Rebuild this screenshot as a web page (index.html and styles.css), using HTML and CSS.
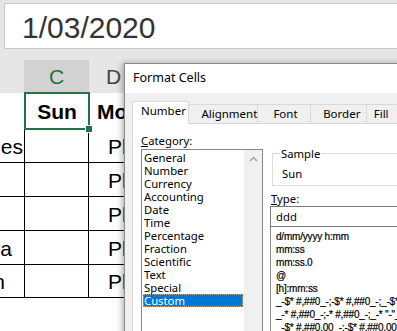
FILE: index.html
```html
<!DOCTYPE html>
<html lang="en">
<head>
    <meta charset="UTF-8">
    <title>Format Cells</title>
    <link rel="stylesheet" href="styles.css">
</head>
<body>
    <div class="app">
        <div class="formula-bar">
            <div class="formula-box">1/03/2020</div>
        </div>

        <div class="sheet">
            <div class="col-head"></div>
            <div class="col-head selected">C</div>
            <div class="col-head d-head">D</div>

            <div class="cell"></div>
            <div class="cell bold">Sun</div>
            <div class="cell bold mo">Mo</div>

            <div class="cell b-cell line pad-es">es</div>
            <div class="cell line"></div>
            <div class="cell line pl">Pl</div>

            <div class="cell b-cell line"></div>
            <div class="cell line"></div>
            <div class="cell line pl">Pl</div>

            <div class="cell b-cell line"></div>
            <div class="cell line"></div>
            <div class="cell line pl">Pl</div>

            <div class="cell b-cell line pad-ra">ra</div>
            <div class="cell line"></div>
            <div class="cell line pl">Pl</div>

            <div class="cell b-cell line pad-n">n</div>
            <div class="cell line"></div>
            <div class="cell line pl">Pl</div>

            <div class="selection"><span class="handle"></span></div>
        </div>

        <div class="dialog">
            <div class="dialog-title">Format Cells</div>
            <div class="dialog-body">
                <div class="tabs">
                    <div class="tab active">Number</div>
                    <div class="tab">Alignment</div>
                    <div class="tab">Font</div>
                    <div class="tab">Border</div>
                    <div class="tab">Fill</div>
                </div>
                <div class="tab-page">
                    <div class="category">
                        <div class="label"><u>C</u>ategory:</div>
                        <div class="listbox">
                            <ul class="items">
                                <li>General</li>
                                <li>Number</li>
                                <li>Currency</li>
                                <li>Accounting</li>
                                <li>Date</li>
                                <li>Time</li>
                                <li>Percentage</li>
                                <li>Fraction</li>
                                <li>Scientific</li>
                                <li>Text</li>
                                <li>Special</li>
                                <li class="current">Custom</li>
                            </ul>
                            <div class="scrollbar">
                                <svg width="9" height="6" viewBox="0 0 9 6"><path d="M1 5 L4.5 1.5 L8 5" fill="none" stroke="#a3a3a3" stroke-width="1.5"/></svg>
                            </div>
                        </div>
                    </div>
                    <div class="details">
                        <fieldset class="sample">
                            <legend>Sample</legend>
                            <div class="sample-value">Sun</div>
                        </fieldset>
                        <div class="label type-label"><u>T</u>ype:</div>
                        <div class="type-input">ddd</div>
                        <ul class="type-list">
                            <li>d/mm/yyyy h:mm</li>
                            <li>mm:ss</li>
                            <li>mm:ss.0</li>
                            <li>@</li>
                            <li>[h]:mm:ss</li>
                            <li>_-$* #,##0_-;-$* #,##0_-;_-$* "-"_-;_-@_-</li>
                            <li>_-* #,##0_-;-* #,##0_-;_-* "-"_-;_-@_-</li>
                            <li>_-$* #,##0.00_-;-$* #,##0.00_-;_-$* "-"??_-;_-@_-</li>
                        </ul>
                    </div>
                </div>
            </div>
        </div>
    </div>
</body>
</html>
```

FILE: styles.css
```css
body {
    margin: 0;
    background-color: #e6e6e6;
    font-family: "Liberation Sans", Arial, sans-serif;
    overflow: hidden;
}
.app {
    position: relative;
    width: 397px;
    height: 331px;
    overflow: hidden;
}

/* formula bar */
.formula-bar {
    padding: 3px 0 0 4px;
}
.formula-box {
    height: 46px;
    background-color: #fff;
    border: 1px solid #c8c8c8;
    border-right: none;
    box-sizing: border-box;
    padding-left: 17px;
    font-size: 30px;
    line-height: 47px;
    color: #333;
}

/* worksheet */
.sheet {
    position: relative;
    margin-top: 11px;
    display: grid;
    grid-template-columns: 25px 64px 320px;
    grid-template-rows: 33px 36px 34px 34px 34px 34px 33px;
    background-color: #fff;
    height: 290px;
    align-content: start;
}
.col-head {
    background-color: #e6e6e6;
    border-right: 1px solid #cfcfcf;
    display: flex;
    justify-content: center;
    align-items: center;
    font-size: 21px;
    color: #444;
}
.col-head.selected {
    background-color: #d2d2d2;
    color: #217346;
}
.col-head.d-head {
    justify-content: flex-start;
    padding-left: 17px;
    border-right: none;
}
.cell {
    display: flex;
    align-items: flex-end;
    padding-bottom: 3px;
    font-size: 21px;
    color: #000;
    overflow: hidden;
    white-space: nowrap;
    box-sizing: border-box;
}
.cell.bold {
    font-weight: bold;
    justify-content: center;
    padding-bottom: 5px;
}
.cell.bold.mo {
    justify-content: flex-start;
    padding-left: 8px;
}
.cell.line {
    border-bottom: 1px solid #000;
    border-right: 1px solid #000;
}
.b-cell {
    justify-content: flex-end;
}
.pad-es { padding-right: 1px; }
.pad-ra { padding-right: 12px; }
.pad-n { padding-right: 19px; }
.cell.pl {
    padding-left: 19px;
    border-right: none;
}
.selection {
    position: absolute;
    left: 24px;
    top: 32px;
    width: 62px;
    height: 34px;
    border: 2px solid #217346;
}
.handle {
    position: absolute;
    right: -5px;
    bottom: -5px;
    width: 6px;
    height: 6px;
    background-color: #217346;
    border: 1px solid #fff;
}

/* dialog */
.dialog {
    position: absolute;
    left: 124px;
    top: 63px;
    width: 300px;
    height: 290px;
    border: 1px solid #8a8a8a;
    background-color: #f0f0f0;
    box-shadow: -2px 0 6px rgba(0, 0, 0, 0.3);
    font-family: "Noto Sans", sans-serif;
    font-size: 11.3px;
    color: #000;
}
.dialog-title {
    height: 29px;
    background-color: #fff;
    padding-left: 8px;
    line-height: 27px;
    font-size: 12.5px;
}
.dialog-body {
    padding: 8px 0 0 7px;
}
.tabs {
    display: flex;
    align-items: flex-end;
    height: 22px;
}
.tab {
    height: 19px;
    box-sizing: border-box;
    border: 1px solid #d9d9d9;
    border-bottom: none;
    border-left: none;
    padding-left: 12px;
    line-height: 17px;
    white-space: nowrap;
    font-size: 11.5px;
}
.tab:nth-child(1) { width: 59px; }
.tab:nth-child(2) { width: 70px; }
.tab:nth-child(3) { width: 54px; padding-left: 15px; }
.tab:nth-child(4) { width: 57px; }
.tab:nth-child(5) { width: 60px; padding-left: 7px; }
.tab.active {
    height: 23px;
    margin-bottom: -1px;
    background-color: #fff;
    border-left: 1px solid #d9d9d9;
    padding-left: 8px;
    position: relative;
}
.tab-page {
    background-color: #fff;
    border: 1px solid #d9d9d9;
    height: 240px;
    padding: 8px 0 0 8px;
    display: grid;
    grid-template-columns: 122px 1fr;
    column-gap: 7px;
}
.label {
    height: 17px;
    line-height: 17px;
}
.listbox {
    display: flex;
    border: 1px solid #828790;
    height: 200px;
    box-sizing: border-box;
}
.items {
    list-style: none;
    margin: 0;
    padding: 1px 1px 0 1px;
    flex: 1;
}
.items li {
    height: 13px;
    line-height: 13px;
    padding-left: 1px;
    white-space: nowrap;
}
.items li.current {
    background-color: #0078d7;
    color: #fff;
    outline: 1px dotted #f0a040;
    outline-offset: -1px;
}
.scrollbar {
    width: 18px;
    background-color: #f0f0f0;
    display: flex;
    justify-content: center;
    padding-top: 6px;
    box-sizing: border-box;
}
.scrollbar svg {
    display: block;
}
.details {
    min-width: 0;
}
.sample {
    margin: 14px 0 0 2px;
    padding: 5px 9px 2px 9px;
    border: 1px solid #dcdcdc;
    border-right: none;
    height: 40px;
    box-sizing: border-box;
}
.sample legend {
    padding: 0 1px;
    margin-left: -2px;
    line-height: 15px;
}
.sample-value {
    line-height: 16px;
}
.type-label {
    margin-top: 4px;
    padding-left: 1px;
    height: 16px;
}
.type-input {
    height: 21px;
    box-sizing: border-box;
    border: 1px solid #7a7a7a;
    border-right: none;
    padding-left: 5px;
    line-height: 19px;
}
.type-list {
    list-style: none;
    margin: 0;
    padding: 3px 0 0 5px;
    height: 120px;
    border: 1px solid #828790;
    border-top: none;
    border-right: none;
    font-family: "Liberation Sans", Arial, sans-serif;
    font-size: 10px;
    letter-spacing: -0.2px;
    -webkit-text-stroke: 0.2px #000;
    white-space: nowrap;
    overflow: hidden;
}
.type-list li {
    height: 13px;
    line-height: 13px;
}
```
